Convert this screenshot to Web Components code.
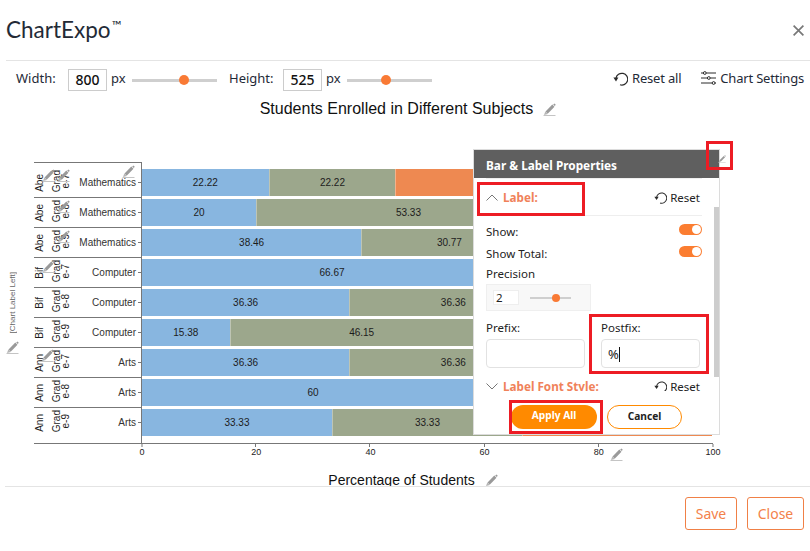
<!DOCTYPE html>
<html>
<head>
<meta charset="utf-8">
<title>ChartExpo</title>
<style>
  html, body { margin: 0; background: #fff; }
  body { width: 810px; height: 551px; overflow: hidden; }
</style>
</head>
<body>
<chart-dialog></chart-dialog>
<script>
const UI_FONT = '"Noto Sans", "Open Sans", sans-serif';
const CHART_FONT = '"Liberation Sans", Arial, sans-serif';

class EditPencil extends HTMLElement {
  constructor() {
    super();
    this.attachShadow({ mode: "open" });
  }

  connectedCallback() {
    this.shadowRoot.innerHTML = `
    <style>
      :host { display: inline-block; width: 13px; height: 13px; line-height: 0; }
      svg { width: 100%; height: 100%; }
    </style>
    <svg viewBox="0 0 13 13">
      <path d="M0.5 12.5H12.5" stroke="#c4c4c4" stroke-width="1" fill="none"/>
      <path d="M3.6 9.6L10.4 2.6" stroke="#9a9a9a" stroke-width="3" fill="none"/>
      <path d="M1 12L2.3 8.4L4.9 10.9Z" fill="#b5b5b5"/>
      <path d="M10.2 1.4L11.4 0.4L12.8 1.8L11.7 3Z" fill="#9a9a9a"/>
    </svg>`;
  }
}

class ResetIcon extends HTMLElement {
  constructor() {
    super();
    this.attachShadow({ mode: "open" });
  }

  connectedCallback() {
    this.shadowRoot.innerHTML = `
    <style>
      :host { display: inline-block; width: 15px; height: 15px; line-height: 0; }
      svg { width: 100%; height: 100%; }
    </style>
    <svg viewBox="0 0 15 15">
      <path d="M3 7.2A5.9 5.9 0 1 1 7 13.8" stroke="#2b2b2b" stroke-width="1.2" fill="none"/>
      <path d="M0.4 6.6H5.4L3 10.4Z" fill="#2b2b2b"/>
    </svg>`;
  }
}

class SizeSlider extends HTMLElement {
  constructor() {
    super();
    this.attachShadow({ mode: "open" });
  }

  connectedCallback() {
    const pos = this.getAttribute("pos");
    this.shadowRoot.innerHTML = `
    <style>
      :host {
        display: block;
        position: relative;
        width: var(--track, 85px);
        height: 3px;
        background: #cfcfcf;
      }
      .thumb {
        position: absolute;
        left: ${pos}px;
        top: 50%;
        width: var(--thumb, 10px);
        height: var(--thumb, 10px);
        transform: translate(-50%, -50%);
        border-radius: 50%;
        background: #f97a35;
      }
    </style>
    <div class="thumb"></div>`;
  }
}

class SizeField extends HTMLElement {
  constructor() {
    super();
    this.attachShadow({ mode: "open" });
  }

  connectedCallback() {
    this.shadowRoot.innerHTML = `
    <style>
      :host { display: flex; align-items: center; height: 22px; }
      .label { width: ${this.getAttribute("label-width")}px; position: relative; top: -2px; }
      .box {
        width: 39px;
        height: 22px;
        box-sizing: border-box;
        border: 1px solid #ccc;
        text-align: center;
        font-size: 14px;
        line-height: 20px;
        color: #111;
        font-weight: 500;
      }
      .unit { width: 21px; margin-left: 4px; position: relative; top: -2px; }
    </style>
    <span class="label">${this.getAttribute("label")}</span>
    <span class="box">${this.getAttribute("value")}</span>
    <span class="unit">px</span>
    <size-slider pos="${this.getAttribute("pos")}"></size-slider>`;
  }
}

class DialogHeader extends HTMLElement {
  constructor() {
    super();
    this.attachShadow({ mode: "open" });
  }

  connectedCallback() {
    this.shadowRoot.innerHTML = `
    <style>
      :host {
        display: flex;
        justify-content: space-between;
        align-items: center;
        height: 60px;
        margin-left: 6px;
        padding-right: 6px;
        border-bottom: 1px solid #e4e4e4;
      }
      .logo { font: 22.5px/30px Lato, ${UI_FONT}; color: #232a36; }
      sup { font-size: 13px; line-height: 0; position: relative; top: 0; vertical-align: super; margin-left: 1px; }
      svg { width: 11px; height: 11px; display: block; }
    </style>
    <span class="logo">ChartExpo<sup>™</sup></span>
    <svg viewBox="0 0 11 11"><path d="M.6.6L10.4 10.4M10.4.6L.6 10.4" stroke="#787878" stroke-width="1.7" fill="none"/></svg>`;
  }
}

class DialogToolbar extends HTMLElement {
  constructor() {
    super();
    this.attachShadow({ mode: "open" });
  }

  connectedCallback() {
    this.shadowRoot.innerHTML = `
    <style>
      :host {
        display: flex;
        align-items: center;
        box-sizing: border-box;
        height: 36px;
        padding: 2px 6px 0 16px;
        font: 13px ${UI_FONT};
        color: #1f2a37;
      }
      size-field + size-field { margin-left: 12px; }
      .actions { margin-left: auto; display: flex; align-items: center; position: relative; top: -2px; letter-spacing: -.2px; }
      .action { display: flex; align-items: center; gap: 4px; }
      .action + .action { margin-left: 20px; }
      .settings { width: 15px; height: 14px; display: block; }
    </style>
    <size-field label="Width:" label-width="52" value="800" pos="52"></size-field>
    <size-field label="Height:" label-width="54" value="525" pos="39"></size-field>
    <div class="actions">
      <span class="action"><reset-icon></reset-icon>Reset all</span>
      <span class="action">
        <svg class="settings" viewBox="0 0 15 14" fill="none" stroke="#2b2b2b" stroke-width="1">
          <path d="M0 2H2.4M5.2 2H15M0 7H6.4M9.2 7H15M0 12H11.2M14 12H15"/>
          <circle cx="3.8" cy="2" r="1.4"/><circle cx="7.8" cy="7" r="1.4"/><circle cx="12.6" cy="12" r="1.4"/>
        </svg>Chart Settings</span>
    </div>`;
  }
}

class ChartTitle extends HTMLElement {
  constructor() {
    super();
    this.attachShadow({ mode: "open" });
  }

  connectedCallback() {
    this.shadowRoot.innerHTML = `
    <style>
      :host {
        display: flex;
        justify-content: center;
        align-items: center;
        gap: 10px;
        color: #111;
        font-family: ${CHART_FONT};
      }
    </style>
    <slot></slot><edit-pencil></edit-pencil>`;
  }
}

class ChartRow extends HTMLElement {
  constructor() {
    super();
    this.attachShadow({ mode: "open" });
  }

  connectedCallback() {
    const colors = ["#88b6e0", "#9ca78c", "#ee8951"];
    const values = this.getAttribute("values").split(",");
    const shown = (this.getAttribute("shown") || "").split(",");
    const segs = values.map((v, i) =>
      `<div class="seg" style="width:${v}%;background:${colors[i]}">${shown[i] || ""}</div>`
    ).join("");
    this.shadowRoot.innerHTML = `
    <style>
      :host {
        display: flex;
        font: 10px ${CHART_FONT};
        color: #1c1c1c;
      }
      .labels {
        width: 108px;
        height: 100%;
        box-sizing: border-box;
        display: flex;
        align-items: center;
        border-right: 1px solid #777;
        border-bottom: var(--rule, 1px solid #777);
        position: relative;
        padding-left: 1px;
        padding-top: var(--pad-top, 0);
        padding-bottom: var(--pad-bottom, 0);
      }
      .labels::after {
        content: "";
        position: absolute;
        right: 0;
        top: var(--tick, 14px);
        width: 3px;
        height: 1px;
        background: #777;
      }
      .v {
        width: 10px;
        writing-mode: vertical-rl;
        transform: rotate(180deg);
        text-align: center;
        line-height: 10px;
        white-space: nowrap;
      }
      .up { margin-bottom: 3px; }
      .cat { flex: 1; text-align: right; padding-right: 5px; color: #333; }
      .bars {
        width: 570px;
        display: flex;
        height: 27px;
        margin-top: var(--bar-top, 1px);
      }
      .seg {
        box-sizing: border-box;
        height: 27px;
        line-height: 27px;
        text-align: center;
        border-left: 1px solid rgba(255,255,255,.35);
      }
      .seg:first-child { border-left: 0; }
    </style>
    <div class="labels">
      <span class="v">${this.getAttribute("name")}</span>
      <span class="v up" style="margin-left:7px">Grad</span>
      <span class="v up" style="margin-left:-1px">${this.getAttribute("grade")}</span>
      <span class="cat">${this.getAttribute("cat")}</span>
    </div>
    <div class="bars">${segs}</div>`;
  }
}

class XAxis extends HTMLElement {
  constructor() {
    super();
    this.attachShadow({ mode: "open" });
  }

  connectedCallback() {
    const ticks = [0, 20, 40, 60, 80, 100].map(t =>
      `<span class="tick" style="left:${t * 5.71}px">${t}</span>`
    ).join("");
    this.shadowRoot.innerHTML = `
    <style>
      :host {
        display: block;
        position: relative;
        width: 572px;
        height: 29px;
        font: 9px ${CHART_FONT};
        color: #222;
      }
      .tick {
        position: absolute;
        top: 3px;
        transform: translateX(-50%);
      }
      .tick::before {
        content: "";
        position: absolute;
        left: calc(50% - 1px);
        top: -3px;
        width: 1px;
        height: 3px;
        background: #777;
      }
    </style>
    ${ticks}`;
  }
}

class BarChart extends HTMLElement {
  constructor() {
    super();
    this.attachShadow({ mode: "open" });
  }

  static get rows() {
    return [
      ["Abe", "e-7", "Mathematics", "22.22,22.22,55.56", "22.22,22.22"],
      ["Abe", "e-8", "Mathematics", "20,53.33,26.67", "20,53.33"],
      ["Abe", "e-9", "Mathematics", "38.46,30.77,30.77", "38.46,30.77"],
      ["Bif", "e-7", "Computer", "66.67,33.33", "66.67"],
      ["Bif", "e-8", "Computer", "36.36,36.36,27.28", "36.36,36.36"],
      ["Bif", "e-9", "Computer", "15.38,46.15,38.47", "15.38,46.15"],
      ["Ann", "e-7", "Arts", "36.36,36.36,27.28", "36.36,36.36"],
      ["Ann", "e-8", "Arts", "60,40", "60"],
      ["Ann", "e-9", "Arts", "33.33,33.33,33.34", "33.33,33.33"],
    ];
  }

  static get pencils() {
    // edit handles that float over the axis labels
    return [
      [42, 7], [57, 7], [122, 3], [57, 38], [57, 68], [42, 98], [41, 187], [6, 179], [610, 286],
    ];
  }

  connectedCallback() {
    const last = BarChart.rows.length - 1;
    const rows = BarChart.rows.map((r, i) => {
      let cls = "";
      if (i === 0) cls = "first";
      if (i === last) cls = "last";
      return `<chart-row class="${cls}" name="${r[0]}" grade="${r[1]}" cat="${r[2]}" values="${r[3]}" shown="${r[4]}"></chart-row>`;
    }).join("");
    const pencils = BarChart.pencils.map(p =>
      `<edit-pencil style="position:absolute;left:${p[0]}px;top:${p[1]}px"></edit-pencil>`
    ).join("");
    this.shadowRoot.innerHTML = `
    <style>
      :host { display: block; position: relative; height: 324px; overflow: hidden; }
      .plot { display: flex; height: 282px; }
      .side {
        width: 34px;
        display: flex;
        align-items: center;
        justify-content: center;
        font: 8px ${CHART_FONT};
        color: #666;
      }
      .side span { writing-mode: vertical-rl; transform: rotate(180deg); position: relative; left: -5px; white-space: nowrap; }
      .rows { flex: 1; border-top: 1px solid transparent; }
      .rule { position: absolute; left: 34px; top: 0; width: 108px; height: 1px; background: #777; }
      .base { position: absolute; left: 34px; top: 281px; width: 679px; height: 1px; background: #777; }
      chart-row { height: 30px; --tick: 14px; }
      chart-row.first { height: 35px; --pad-top: 5px; --tick: 19px; --bar-top: 6px; }
      chart-row.last { height: 35px; --pad-bottom: 6px; --tick: 14px; --rule: 0; }
      x-axis { margin-left: 142px; }
      chart-title { margin-top: -1px; padding-left: 16px; font-size: 14px; line-height: 16px; }
    </style>
    <div class="plot">
      <div class="side"><span>[Chart Label Left]</span></div>
      <div class="rows">${rows}</div>
    </div>
    <div class="rule"></div>
    <div class="base"></div>
    <x-axis></x-axis>
    <chart-title>Percentage of Students</chart-title>
    ${pencils}`;
  }
}

class ToggleSwitch extends HTMLElement {
  constructor() {
    super();
    this.attachShadow({ mode: "open" });
  }

  connectedCallback() {
    this.shadowRoot.innerHTML = `
    <style>
      :host {
        display: block;
        position: relative;
        width: 23px;
        height: 11px;
        border-radius: 6px;
        background: #fb7d31;
      }
      i { position: absolute; right: 1px; top: 1px; width: 9px; height: 9px; border-radius: 50%; background: #fff; }
    </style>
    <i></i>`;
  }
}

class PanelSection extends HTMLElement {
  constructor() {
    super();
    this.attachShadow({ mode: "open" });
  }

  connectedCallback() {
    const open = this.hasAttribute("open");
    this.shadowRoot.innerHTML = `
    <style>
      :host { display: flex; align-items: center; height: 36px; }
      svg { width: 12px; height: 7px; margin-right: 5px; }
      b { font-weight: 700; font-size: 11.7px; color: #f0825a; }
      .reset { margin-left: auto; padding-right: 2px; display: flex; align-items: center; gap: 3px; color: #222; }
      reset-icon { width: 13px; height: 13px; }
    </style>
    <svg viewBox="0 0 12 7"><path d="${open ? "M.5 6.5L6 1L11.5 6.5" : "M.5 .5L6 6L11.5 .5"}" stroke="#777" fill="none"/></svg>
    <b>${this.getAttribute("label")}</b>
    <span class="reset"><reset-icon></reset-icon>Reset</span>`;
  }
}

class PropPanel extends HTMLElement {
  constructor() {
    super();
    this.attachShadow({ mode: "open" });
  }

  connectedCallback() {
    this.shadowRoot.innerHTML = `
    <style>
      :host {
        display: flex;
        flex-direction: column;
        position: absolute;
        left: 473px;
        top: 149px;
        width: 247px;
        height: 286px;
        box-sizing: border-box;
        background: #fff;
        border: 1px solid #dcdcdc;
        font: 11.5px ${UI_FONT};
        color: #222;
      }
      .head {
        flex: none;
        height: 28px;
        line-height: 31px;
        padding-left: 12px;
        background: #5f5f5f;
        color: #fff;
        font-weight: 700;
        font-size: 11.8px;
      }
      .body {
        flex: none;
        height: 213px;
        overflow: hidden;
        padding: 0 17px 0 12px;
      }
      .open { border-top: 1px solid #eee; border-bottom: 1px solid #eee; }
      .line { display: flex; justify-content: space-between; align-items: center; height: 22px; }
      .line toggle-switch { position: relative; top: -2px; }
      .line.first { margin-top: 4px; }
      .prec { height: 18px; line-height: 18px; margin-top: 1px; }
      .precbox {
        display: flex;
        align-items: center;
        width: 105px;
        height: 27px;
        box-sizing: border-box;
        margin-top: 1px;
        padding-left: 6px;
        background: #f8f8f8;
        border: 1px solid #efefef;
      }
      .precbox span {
        width: 26px;
        height: 15px;
        box-sizing: border-box;
        padding-left: 2px;
        line-height: 14px;
        background: #fff;
        border: 1px solid #eee;
        margin-right: 11px;
      }
      size-slider { --track: 41px; --thumb: 8px; height: 2px; }
      .fix { display: flex; gap: 16px; margin-top: 7px; }
      .fix div { width: 99px; }
      .fix label { display: block; height: 20px; line-height: 20px; }
      .fix span {
        display: block;
        height: 29px;
        box-sizing: border-box;
        margin-top: 1px;
        padding-left: 6px;
        border: 1px solid #e2e2e2;
        border-radius: 4px;
        line-height: 28px;
        font-size: 13px;
      }
      .caret { display: inline-block; width: 1px; height: 15px; background: #111; vertical-align: -3px; }
      .scroll { position: absolute; right: 0; top: 57px; width: 5px; height: 170px; background: #cdcdcd; }
      .foot { flex: 1; display: flex; gap: 10px; padding: 14px 0 0 37px; background: #fff; }
      .btn {
        box-sizing: border-box;
        height: 24px;
        border-radius: 12px;
        text-align: center;
        line-height: 21px;
        font-size: 10.2px;
        font-weight: 700;
      }
      .apply { width: 86px; background: #ff8a00; color: #fff; }
      .cancel { width: 75px; border: 1px solid #ff8a00; color: #222; background: #fff; }
      .mark { position: absolute; box-sizing: border-box; border: 3px solid #ed1c24; }
      .pen { position: absolute; left: 244px; top: 5px; width: 8px; height: 8px; }
    </style>
    <div class="head">Bar &amp; Label Properties</div>
    <div class="body">
      <panel-section class="open" open label="Label:"></panel-section>
      <div class="line first"><span>Show:</span><toggle-switch></toggle-switch></div>
      <div class="line"><span>Show Total:</span><toggle-switch></toggle-switch></div>
      <div class="prec">Precision</div>
      <div class="precbox"><span>2</span><size-slider pos="26"></size-slider></div>
      <div class="fix">
        <div><label>Prefix:</label><span></span></div>
        <div><label>Postfix:</label><span>%<i class="caret"></i></span></div>
      </div>
      <panel-section label="Label Font Style:"></panel-section>
    </div>
    <div class="foot">
      <div class="btn apply">Apply All</div>
      <div class="btn cancel">Cancel</div>
    </div>
    <div class="scroll"></div>
    <edit-pencil class="pen"></edit-pencil>
    <div class="mark" style="left:232px;top:-9px;width:27px;height:29px"></div>
    <div class="mark" style="left:3px;top:32px;width:108px;height:34px"></div>
    <div class="mark" style="left:115px;top:164px;width:120px;height:60px"></div>
    <div class="mark" style="left:35px;top:250px;width:94px;height:34px"></div>`;
  }
}

class DialogFooter extends HTMLElement {
  constructor() {
    super();
    this.attachShadow({ mode: "open" });
  }

  connectedCallback() {
    this.shadowRoot.innerHTML = `
    <style>
      :host {
        display: flex;
        justify-content: flex-end;
        gap: 10px;
        margin-left: 5px;
        padding: 10px 6px 0 0;
        border-top: 1px solid #e4e4e4;
        font: 14px ${UI_FONT};
      }
      span {
        height: 33px;
        box-sizing: border-box;
        border: 1px solid #f08046;
        border-radius: 3px;
        color: #f3814a;
        line-height: 32px;
        text-align: center;
      }
      .save { width: 52px; }
      .close { width: 57px; }
    </style>
    <span class="save">Save</span>
    <span class="close">Close</span>`;
  }
}

class ChartDialog extends HTMLElement {
  constructor() {
    super();
    this.attachShadow({ mode: "open" });
  }

  connectedCallback() {
    this.shadowRoot.innerHTML = `
    <style>
      :host { display: block; position: relative; width: 810px; height: 551px; overflow: hidden; background: #fff; }
      chart-title.main { height: 24px; padding-left: 6px; font-size: 16px; line-height: 24px; margin-bottom: 41px; }
    </style>
    <dialog-header></dialog-header>
    <dialog-toolbar></dialog-toolbar>
    <chart-title class="main">Students Enrolled in Different Subjects</chart-title>
    <bar-chart></bar-chart>
    <dialog-footer></dialog-footer>
    <prop-panel></prop-panel>`;
  }
}

customElements.define("edit-pencil", EditPencil);
customElements.define("reset-icon", ResetIcon);
customElements.define("size-slider", SizeSlider);
customElements.define("size-field", SizeField);
customElements.define("dialog-header", DialogHeader);
customElements.define("dialog-toolbar", DialogToolbar);
customElements.define("chart-title", ChartTitle);
customElements.define("chart-row", ChartRow);
customElements.define("x-axis", XAxis);
customElements.define("bar-chart", BarChart);
customElements.define("toggle-switch", ToggleSwitch);
customElements.define("panel-section", PanelSection);
customElements.define("prop-panel", PropPanel);
customElements.define("dialog-footer", DialogFooter);
customElements.define("chart-dialog", ChartDialog);
</script>
</body>
</html>
